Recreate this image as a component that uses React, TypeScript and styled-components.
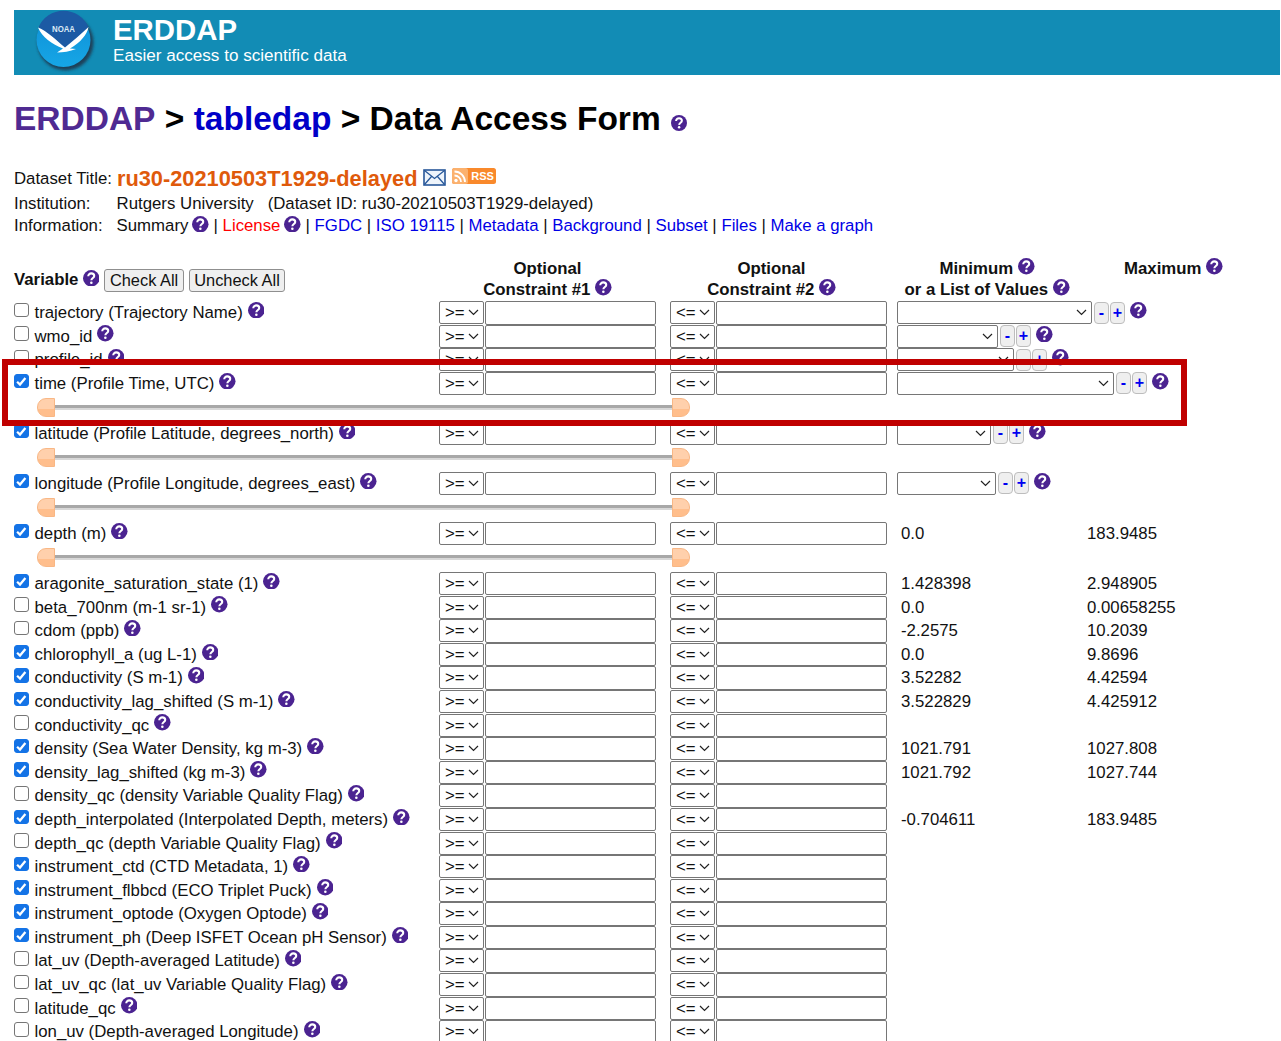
import React from 'react';
import styled, { createGlobalStyle } from 'styled-components';

const GlobalStyle = createGlobalStyle`
  html, body {
    margin: 0;
    padding: 0;
    background: #fff;
  }
  body {
    font-family: "Liberation Sans", Arial, sans-serif;
    font-size: 16.8px;
    color: #111;
  }
`;

const Page = styled.div`
  width: 1281px;
  height: 1041px;
  overflow: hidden;
  position: relative;
  padding: 10px 1px 0 14px;
  box-sizing: border-box;
`;

const Banner = styled.div`
  height: 65px;
  background: #128cb5;
  display: flex;
  align-items: center;
  color: #fff;
  padding-left: 18px;
  gap: 15px;
`;

const BannerText = styled.div`
  display: flex;
  flex-direction: column;
  margin-top: -3px;
`;

const BannerTitle = styled.div`
  font-size: 29.4px;
  font-weight: 700;
  line-height: 30px;
`;

const BannerSub = styled.div`
  font-size: 17.1px;
  line-height: 22px;
`;

const Heading = styled.h1`
  margin: 24px 0 0;
  font-size: 33.5px;
  line-height: 40px;
  font-weight: 700;
  color: #000;
  display: flex;
  align-items: center;
  white-space: pre;
`;

const Crumb = styled.span<{ $color: string }>`
  color: ${({ $color }) => $color};
`;

const HelpSvg = styled.svg<{ $size?: number; $gap?: number; $top?: number }>`
  width: ${({ $size }) => $size ?? 16.5}px;
  height: ${({ $size }) => $size ?? 16.5}px;
  flex: none;
  margin-left: ${({ $gap }) => $gap ?? 5}px;
  position: relative;
  top: ${({ $top }) => $top ?? -2}px;
`;

const Help = (props: { $size?: number; $gap?: number; $top?: number }) => (
  <HelpSvg viewBox="0 0 16 16" {...props}>
    <circle cx="8" cy="8" r="8" fill="#4b2391" />
    <path
      d="M5.1 6.1C5.1 4.4 6.4 3.3 8 3.3C9.7 3.3 10.9 4.3 10.9 5.8C10.9 7.7 8.2 7.9 8.1 9.9"
      fill="none"
      stroke="#fff"
      strokeWidth="2"
    />
    <circle cx="8.1" cy="12.3" r="1.25" fill="#fff" />
  </HelpSvg>
);

const InfoBlock = styled.div`
  margin-top: 25px;
  display: grid;
  grid-template-columns: 102.6px 1fr;
  grid-auto-rows: auto;
`;

const InfoLabel = styled.div`
  line-height: 22px;
  display: flex;
  align-items: flex-end;
  white-space: pre;
`;

const InfoValue = styled.div`
  line-height: 22px;
  display: flex;
  align-items: center;
  white-space: pre;
`;

const TitleLabel = styled.div`
  grid-column: 1 / 3;
  display: flex;
  align-items: center;
  white-space: pre;
  height: 29px;
`;

const DatasetName = styled.span`
  color: #df5a0b;
  font-weight: 700;
  font-size: 21.8px;
  margin-left: 5px;
`;

const Link = styled.a<{ $red?: boolean }>`
  color: ${({ $red }) => ($red ? '#f00' : '#0000e6')};
  text-decoration: none;
`;

const HeaderRow = styled.div`
  margin-top: 21px;
  display: grid;
  grid-template-columns: 425px 217px 231px 10px 180px 10px 173px;
  height: 43px;
  font-weight: 700;
`;

const VariableHead = styled.div`
  display: flex;
  align-items: center;
  margin-top: 6px;
  height: 32px;
`;

const HeadButton = styled.button`
  font-family: inherit;
  font-size: 16.4px;
  height: 23px;
  padding: 0 4.5px;
  background: #efefef;
  border: 1px solid #8f8f8f;
  border-radius: 3px;
  color: #111;
  margin-left: 5px;
  line-height: 20px;
`;

const HeadCell = styled.div<{ $column: number }>`
  grid-column: ${({ $column }) => $column};
  display: flex;
  flex-direction: column;
  align-items: center;
  line-height: 21px;
`;

const HeadLine = styled.div`
  display: flex;
  align-items: center;
  white-space: pre;
`;

const Row = styled.div<{ $slider?: boolean }>`
  display: grid;
  grid-template-columns: 425px 45px 172px 14px 45px 172px 10px 190px 1fr;
  height: ${({ $slider }) => ($slider ? 50.05 : 23.6)}px;
  grid-template-rows: 23.6px 26.5px;
  align-items: start;
`;

const VarCell = styled.label`
  display: flex;
  align-items: center;
  height: 22px;
  white-space: pre;
  position: relative;
`;

const VarText = styled.span`
  margin-left: 6px;
  position: relative;
  top: 1px;
`;

const CheckWrap = styled.span`
  position: relative;
  width: 14.5px;
  height: 14.5px;
  flex: none;
  top: -2px;
`;

const CheckInput = styled.input`
  appearance: none;
  box-sizing: border-box;
  margin: 0;
  display: block;
  width: 14.5px;
  height: 14.5px;
  border: 1px solid #767676;
  border-radius: 3px;
  background: #fff;
  &:checked {
    background: #1473e6;
    border-color: #1473e6;
  }
`;

const CheckMark = styled.svg`
  position: absolute;
  left: 0;
  top: 0;
  width: 14.5px;
  height: 14.5px;
  pointer-events: none;
`;

const SelectWrap = styled.div<{ $width?: number }>`
  position: relative;
  width: ${({ $width }) => ($width ? `${$width}px` : '100%')};
  height: 23px;
  flex: none;
`;

const NativeSelect = styled.select`
  appearance: none;
  box-sizing: border-box;
  width: 100%;
  height: 100%;
  border: 1px solid #767676;
  border-radius: 2px;
  background: #fff;
  font-family: inherit;
  font-size: 16.8px;
  color: #111;
  padding: 0 0 0 5px;
  margin: 0;
`;

const Chevron = styled.svg`
  position: absolute;
  right: 5px;
  top: 8px;
  width: 11px;
  height: 7px;
  pointer-events: none;
`;

const TextBox = styled.input`
  box-sizing: border-box;
  width: 171px;
  height: 23.5px;
  margin: 0;
  justify-self: end;
  border: 1px solid #767676;
  border-radius: 2px;
  background: #fff;
`;

const ListCell = styled.div`
  grid-column: 8 / 10;
  display: flex;
  align-items: center;
  height: 23px;
`;

const Stepper = styled.button`
  box-sizing: border-box;
  width: 15px;
  height: 22px;
  padding: 0;
  margin-left: 1px;
  background: #efefef;
  border: 1px solid #bdbdbd;
  border-radius: 4px;
  color: #0000f0;
  font-family: inherit;
  font-size: 16px;
  font-weight: 700;
  line-height: 18px;
  flex: none;
  &:first-of-type {
    margin-left: 2px;
  }
`;

const RangeValue = styled.div<{ $left: number }>`
  padding-left: ${({ $left }) => $left}px;
  line-height: 24px;
  white-space: pre;
`;

const SliderRow = styled.div`
  grid-column: 1 / 7;
  display: flex;
  align-items: center;
  height: 19px;
  margin: 2.4px 0 0 22.5px;
  width: 653.5px;
`;

const SliderHandle = styled.div<{ $side: 'left' | 'right' }>`
  box-sizing: border-box;
  width: 18px;
  height: 19px;
  flex: none;
  background: linear-gradient(#ffd0ac 0 60%, #ffbe8c 60% 100%);
  border: 1px solid #f9b785;
  border-radius: ${({ $side }) => ($side === 'left' ? '9px 0 0 9px' : '0 9px 9px 0')};
`;

const SliderTrack = styled.div`
  flex: 1;
  height: 5px;
  background: linear-gradient(#a8a8a8 0 60%, #d8d8d8 60% 100%);
`;

const Marker = styled.div`
  position: absolute;
  left: 2px;
  top: 359px;
  width: 1185px;
  height: 67px;
  box-sizing: border-box;
  border: 6px solid #c00000;
  pointer-events: none;
`;

const NoaaLogo = () => (
  <svg width="66" height="66" viewBox="0 0 66 66" style={{ flex: 'none' }}>
    <defs>
      <filter id="soft" x="-20%" y="-20%" width="140%" height="140%">
        <feGaussianBlur stdDeviation="1.6" />
      </filter>
      <linearGradient id="sea" x1="0" y1="0" x2="0" y2="1">
        <stop offset="0%" stopColor="#0f8fd6" />
        <stop offset="100%" stopColor="#16a6e6" />
      </linearGradient>
    </defs>
    <circle cx="33.5" cy="32.5" r="28" fill="#1d3f58" filter="url(#soft)" />
    <circle cx="31.5" cy="30" r="27" fill="url(#sea)" />
    <path d="M6.5 17.5A27 27 0 0 1 56.5 17.5C49 24 42 31 33 38C25 31 15 22 6.5 17.5Z" fill="#1c5aa4" />
    <path d="M6 17.5C15 21 24 30 33 37.5C41 31 49 24 56.5 17C55.5 24 48 33 38 38.5L44 39C38 41.5 31 42.5 25 42.5L31 38.5C20 34 10 27 6 17.5Z" fill="#fff" />
    <text x="31.5" y="21.5" fontSize="9" fontWeight="700" fill="#dbe9f5" textAnchor="middle" textLength="23" lengthAdjust="spacingAndGlyphs" fontFamily="'Liberation Sans', sans-serif">NOAA</text>
  </svg>
);

const MailIcon = () => (
  <svg width="23" height="17" viewBox="0 0 23 17" style={{ marginLeft: 6, flex: 'none', position: 'relative', top: -1 }}>
    <rect x="1" y="1" width="21" height="15" fill="#eef4fb" stroke="#28589a" strokeWidth="1.6" />
    <path d="M1.5 1.5L11.5 9.5L21.5 1.5M1.5 15.5L8.5 7.5M21.5 15.5L14.5 7.5" fill="none" stroke="#28589a" strokeWidth="1.3" />
  </svg>
);

const RssIcon = () => (
  <svg width="44" height="16" viewBox="0 0 44 16" style={{ marginLeft: 6, flex: 'none', position: 'relative', top: -3 }}>
    <rect width="44" height="16" rx="2.5" fill="#f9892b" />
    <rect width="16" height="16" rx="2.5" fill="#fbb16e" />
    <circle cx="4" cy="12.5" r="1.7" fill="#fff" />
    <path d="M2.5 7.5A6.5 6.5 0 0 1 9 14M2.5 3.5A10.5 10.5 0 0 1 13 14" fill="none" stroke="#fff" strokeWidth="1.8" />
    <text x="30.5" y="12" fontSize="11" fontWeight="700" fill="#fff" textAnchor="middle" fontFamily="'Liberation Sans', sans-serif">RSS</text>
  </svg>
);

const Select = ({ value, width }: { value?: string; width?: number }) => (
  <SelectWrap $width={width}>
    <NativeSelect defaultValue={value}>{value && <option>{value}</option>}</NativeSelect>
    <Chevron viewBox="0 0 11 7">
      <path d="M1 1L5.5 5.5L10 1" fill="none" stroke="#222" strokeWidth="1.2" />
    </Chevron>
  </SelectWrap>
);

type Variable = {
  label: string;
  checked?: boolean;
  slider?: boolean;
  listWidth?: number;
  min?: string;
  max?: string;
};

const variables: Variable[] = [
  { label: 'trajectory (Trajectory Name)', listWidth: 195 },
  { label: 'wmo_id', listWidth: 101 },
  { label: 'profile_id', listWidth: 117 },
  { label: 'time (Profile Time, UTC)', checked: true, slider: true, listWidth: 217 },
  { label: 'latitude (Profile Latitude, degrees_north)', checked: true, slider: true, listWidth: 94 },
  { label: 'longitude (Profile Longitude, degrees_east)', checked: true, slider: true, listWidth: 99 },
  { label: 'depth (m)', checked: true, slider: true, min: '0.0', max: '183.9485' },
  { label: 'aragonite_saturation_state (1)', checked: true, min: '1.428398', max: '2.948905' },
  { label: 'beta_700nm (m-1 sr-1)', min: '0.0', max: '0.00658255' },
  { label: 'cdom (ppb)', min: '-2.2575', max: '10.2039' },
  { label: 'chlorophyll_a (ug L-1)', checked: true, min: '0.0', max: '9.8696' },
  { label: 'conductivity (S m-1)', checked: true, min: '3.52282', max: '4.42594' },
  { label: 'conductivity_lag_shifted (S m-1)', checked: true, min: '3.522829', max: '4.425912' },
  { label: 'conductivity_qc' },
  { label: 'density (Sea Water Density, kg m-3)', checked: true, min: '1021.791', max: '1027.808' },
  { label: 'density_lag_shifted (kg m-3)', checked: true, min: '1021.792', max: '1027.744' },
  { label: 'density_qc (density Variable Quality Flag)' },
  { label: 'depth_interpolated (Interpolated Depth, meters)', checked: true, min: '-0.704611', max: '183.9485' },
  { label: 'depth_qc (depth Variable Quality Flag)' },
  { label: 'instrument_ctd (CTD Metadata, 1)', checked: true },
  { label: 'instrument_flbbcd (ECO Triplet Puck)', checked: true },
  { label: 'instrument_optode (Oxygen Optode)', checked: true },
  { label: 'instrument_ph (Deep ISFET Ocean pH Sensor)', checked: true },
  { label: 'lat_uv (Depth-averaged Latitude)' },
  { label: 'lat_uv_qc (lat_uv Variable Quality Flag)' },
  { label: 'latitude_qc' },
  { label: 'lon_uv (Depth-averaged Longitude)' },
];

const VariableRow = ({ item }: { item: Variable }) => (
  <Row $slider={item.slider}>
    <VarCell>
      <CheckWrap>
        <CheckInput type="checkbox" defaultChecked={item.checked} />
        {item.checked && (
          <CheckMark viewBox="0 0 14 14">
            <path d="M3 7.5L5.8 10.2L11 3.8" fill="none" stroke="#fff" strokeWidth="2.2" />
          </CheckMark>
        )}
      </CheckWrap>
      <VarText>{item.label}</VarText>
      <Help />
    </VarCell>
    <Select value=">=" />
    <TextBox type="text" />
    <span />
    <Select value="<=" />
    <TextBox type="text" />
    <span />
    {item.listWidth ? (
      <ListCell>
        <Select width={item.listWidth} />
        <Stepper>-</Stepper>
        <Stepper>+</Stepper>
        <Help />
      </ListCell>
    ) : (
      <>
        <RangeValue $left={4}>{item.min}</RangeValue>
        <RangeValue $left={0}>{item.max}</RangeValue>
      </>
    )}
    {item.slider && (
      <SliderRow>
        <SliderHandle $side="left" />
        <SliderTrack />
        <SliderHandle $side="right" />
      </SliderRow>
    )}
  </Row>
);

export default function App() {
  return (
    <Page>
      <GlobalStyle />
      <Banner>
        <NoaaLogo />
        <BannerText>
          <BannerTitle>ERDDAP</BannerTitle>
          <BannerSub>Easier access to scientific data</BannerSub>
        </BannerText>
      </Banner>
      <Heading>
        <Crumb $color="#4f2a92">ERDDAP</Crumb>
        {' > '}
        <Crumb $color="#0000c8">tabledap</Crumb>
        {' > Data Access Form'}
        <Help $size={16} $gap={10} $top={4} />
      </Heading>
      <InfoBlock>
        <TitleLabel>
          Dataset Title:
          <DatasetName>ru30-20210503T1929-delayed</DatasetName>
          <MailIcon />
          <RssIcon />
        </TitleLabel>
        <InfoLabel>Institution:</InfoLabel>
        <InfoValue>Rutgers University   (Dataset ID: ru30-20210503T1929-delayed)</InfoValue>
        <InfoLabel>Information:</InfoLabel>
        <InfoValue>
          Summary<Help $gap={4} />{' | '}
          <Link $red>License</Link><Help $gap={4} />{' | '}
          <Link>FGDC</Link>{' | '}
          <Link>ISO 19115</Link>{' | '}
          <Link>Metadata</Link>{' | '}
          <Link>Background</Link>{' | '}
          <Link>Subset</Link>{' | '}
          <Link>Files</Link>{' | '}
          <Link>Make a graph</Link>
        </InfoValue>
      </InfoBlock>
      <HeaderRow>
        <VariableHead>
          Variable<Help $gap={4.5} />
          <HeadButton>Check All</HeadButton>
          <HeadButton>Uncheck All</HeadButton>
        </VariableHead>
        <HeadCell $column={2}>
          <HeadLine>Optional</HeadLine>
          <HeadLine>
            Constraint #1<Help />
          </HeadLine>
        </HeadCell>
        <HeadCell $column={3}>
          <HeadLine>Optional</HeadLine>
          <HeadLine>
            Constraint #2<Help />
          </HeadLine>
        </HeadCell>
        <HeadCell $column={5}>
          <HeadLine>
            Minimum<Help />
          </HeadLine>
          <HeadLine>
            or a List of Values<Help />
          </HeadLine>
        </HeadCell>
        <HeadCell $column={7}>
          <HeadLine>
            Maximum<Help />
          </HeadLine>
        </HeadCell>
      </HeaderRow>
      {variables.map((item) => (
        <VariableRow key={item.label} item={item} />
      ))}
      <Marker />
    </Page>
  );
}
